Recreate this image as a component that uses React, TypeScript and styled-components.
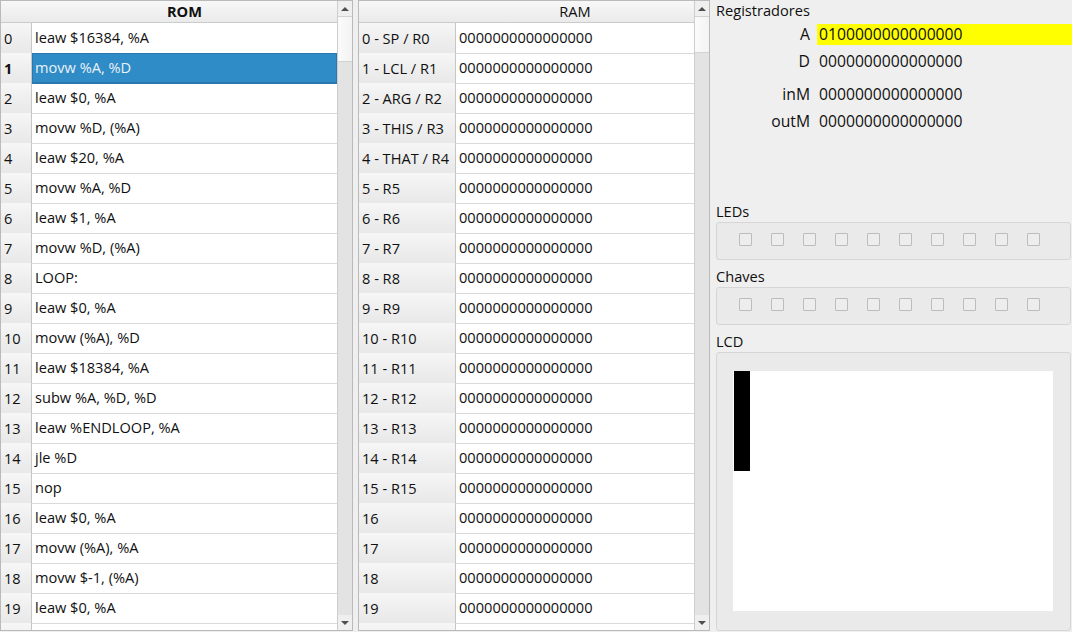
import React from 'react';
import styled, { createGlobalStyle } from 'styled-components';

const GlobalStyle = createGlobalStyle`
  html, body {
    margin: 0;
    padding: 0;
    background: #efefef;
  }
  body {
    font-family: 'Open Sans', 'Noto Sans', 'DejaVu Sans', sans-serif;
    font-size: 14.6px;
    color: #101010;
  }
`;

const Window = styled.div`
  width: 1072px;
  height: 632px;
  display: flex;
  flex-direction: row;
  gap: 5px;
  overflow: hidden;
  background: #efefef;
`;

const Frame = styled.div<{ $width: number }>`
  width: ${(p) => p.$width}px;
  height: 631px;
  box-sizing: border-box;
  border: 1px solid #bababa;
  display: flex;
  flex-direction: row;
  background: #ffffff;
  flex-shrink: 0;
`;

const Grid = styled.div`
  flex: 1;
  min-width: 0;
  overflow: hidden;
  display: flex;
  flex-direction: column;
`;

const HeaderRow = styled.div<{ $gutter: number }>`
  height: 22px;
  flex-shrink: 0;
  box-sizing: border-box;
  display: grid;
  grid-template-columns: ${(p) => p.$gutter}px 1fr;
  border-bottom: 1px solid #cbcbcb;
  background: linear-gradient(#f8f8f8, #eaeaea);
`;

const HeaderTitle = styled.div<{ $bold?: boolean }>`
  text-align: center;
  line-height: 21px;
  font-weight: ${(p) => (p.$bold ? 700 : 400)};
`;

const Row = styled.div<{ $gutter: number }>`
  height: 30px;
  flex-shrink: 0;
  display: grid;
  grid-template-columns: ${(p) => p.$gutter}px 1fr;
`;

const RowHead = styled.div<{ $current?: boolean }>`
  box-sizing: border-box;
  border-right: 1px solid #c6c6c6;
  border-bottom: 1px solid #d0d0d0;
  background: linear-gradient(#f6f6f6, #e8e8e8);
  padding-left: 3px;
  line-height: 30px;
  white-space: nowrap;
  font-weight: ${(p) => (p.$current ? 700 : 400)};
`;

const Cell = styled.div<{ $selected?: boolean }>`
  box-sizing: border-box;
  border-bottom: 1px solid ${(p) => (p.$selected ? '#2a78ad' : '#dadada')};
  padding-left: 3px;
  line-height: 29px;
  white-space: nowrap;
  background: ${(p) => (p.$selected ? '#308cc6' : 'transparent')};
  color: ${(p) => (p.$selected ? '#eaf2f9' : 'inherit')};
  box-shadow: ${(p) => (p.$selected ? 'inset 0 0 0 1px #2a78ad' : 'none')};
`;

const Scrollbar = styled.div`
  width: 15px;
  flex-shrink: 0;
  box-sizing: border-box;
  border-left: 1px solid #cdcdcd;
  background: #e3e3e3;
  display: flex;
  flex-direction: column;
`;

const ArrowButton = styled.div`
  height: 15px;
  flex-shrink: 0;
  display: flex;
  align-items: center;
  justify-content: center;
  background: #efefef;
`;

const Arrow = styled.div<{ $down?: boolean }>`
  width: 0;
  height: 0;
  border-left: 4px solid transparent;
  border-right: 4px solid transparent;
  ${(p) =>
    p.$down
      ? 'border-top: 4px solid #505050;'
      : 'border-bottom: 4px solid #505050;'}
`;

const Track = styled.div`
  flex: 1;
  display: flex;
  flex-direction: column;
`;

const Handle = styled.div<{ $height: number }>`
  height: ${(p) => p.$height}px;
  box-sizing: border-box;
  border-top: 1px solid #d2d2d2;
  border-bottom: 1px solid #d2d2d2;
  background: linear-gradient(90deg, #fbfbfb, #f3f3f3);
`;

const Side = styled.div`
  flex: 1;
  display: flex;
  flex-direction: column;
  padding: 0 1px 0 1px;
  min-width: 0;
`;

const Registers = styled.div`
  height: 201px;
  flex-shrink: 0;
`;

const Caption = styled.div`
  height: 21px;
  line-height: 20px;
  flex-shrink: 0;
`;

const RegGrid = styled.div`
  margin-top: 3px;
  display: grid;
  grid-template-columns: 94px 1fr;
  column-gap: 7px;
  row-gap: 6px;
  font-size: 15.7px;
`;

const RegLabel = styled.div<{ $gap?: boolean }>`
  text-align: right;
  line-height: 21px;
  height: 21px;
  margin-top: ${(p) => (p.$gap ? 6 : 0)}px;
`;

const RegValue = styled.div<{ $hl?: boolean; $gap?: boolean }>`
  height: 21px;
  line-height: 21px;
  padding-left: 2px;
  margin-right: -1px;
  margin-top: ${(p) => (p.$gap ? 6 : 0)}px;
  background: ${(p) => (p.$hl ? '#ffff00' : 'transparent')};
`;

const Section = styled.div`
  display: flex;
  flex-direction: column;
  margin-bottom: 6px;
`;

const GroupBox = styled.div`
  box-sizing: border-box;
  border: 1px solid #d6d6d6;
  border-radius: 3px;
  background: #eaeaea;
`;

const CheckRow = styled(GroupBox)`
  height: 38px;
  display: flex;
  flex-direction: row;
  align-items: flex-start;
  padding: 10px 0 0 22px;
  gap: 19px;
`;

const CheckBox = styled.div`
  width: 13px;
  height: 13px;
  box-sizing: border-box;
  border: 1px solid #bcbcbc;
  border-radius: 1px;
  background: #ededed;
`;

const LcdBox = styled(GroupBox)`
  height: 279px;
  padding: 18px 0 0 16px;
`;

type Entry = { label: string; value: string; selected?: boolean; current?: boolean };

const rom: Entry[] = [
  'leaw $16384, %A',
  'movw %A, %D',
  'leaw $0, %A',
  'movw %D, (%A)',
  'leaw $20, %A',
  'movw %A, %D',
  'leaw $1, %A',
  'movw %D, (%A)',
  'LOOP:',
  'leaw $0, %A',
  'movw (%A), %D',
  'leaw $18384, %A',
  'subw %A, %D, %D',
  'leaw %ENDLOOP, %A',
  'jle %D',
  'nop',
  'leaw $0, %A',
  'movw (%A), %A',
  'movw $-1, (%A)',
  'leaw $0, %A',
  '',
].map((value, i) => ({
  label: i === 20 ? '' : String(i),
  value,
  selected: i === 1,
  current: i === 1,
}));

const ramNames = ['0 - SP / R0', '1 - LCL / R1', '2 - ARG / R2', '3 - THIS / R3', '4 - THAT / R4'];
const ram: Entry[] = Array.from({ length: 21 }, (_, i) => ({
  label: i < 5 ? ramNames[i] : i < 16 ? `${i} - R${i}` : i === 20 ? '' : String(i),
  value: i === 20 ? '' : '0000000000000000',
}));

function Table(props: {
  title: string;
  bold?: boolean;
  width: number;
  gutter: number;
  rows: Entry[];
  handle: number;
}) {
  const { title, bold, width, gutter, rows, handle } = props;
  return (
    <Frame $width={width}>
      <Grid>
        <HeaderRow $gutter={gutter}>
          <div />
          <HeaderTitle $bold={bold}>{title}</HeaderTitle>
        </HeaderRow>
        {rows.map((r, i) => (
          <Row key={i} $gutter={gutter}>
            <RowHead $current={r.current}>{r.label}</RowHead>
            <Cell $selected={r.selected}>{r.value}</Cell>
          </Row>
        ))}
      </Grid>
      <Scrollbar>
        <ArrowButton>
          <Arrow />
        </ArrowButton>
        <Track>
          <Handle $height={handle} />
        </Track>
        <ArrowButton>
          <Arrow $down />
        </ArrowButton>
      </Scrollbar>
    </Frame>
  );
}

const registers = [
  { name: 'A', value: '0100000000000000', hl: true },
  { name: 'D', value: '0000000000000000' },
  { name: 'inM', value: '0000000000000000', gap: true },
  { name: 'outM', value: '0000000000000000' },
];

function Checks() {
  return (
    <CheckRow>
      {Array.from({ length: 10 }, (_, i) => (
        <CheckBox key={i} />
      ))}
    </CheckRow>
  );
}

export default function App() {
  return (
    <>
      <GlobalStyle />
      <Window>
        <Table title="ROM" bold width={353} gutter={31} rows={rom} handle={46} />
        <Table title="RAM" width={352} gutter={97} rows={ram} handle={37} />
        <Side>
          <Registers>
            <Caption>Registradores</Caption>
            <RegGrid>
              {registers.map((r) => (
                <React.Fragment key={r.name}>
                  <RegLabel $gap={r.gap}>{r.name}</RegLabel>
                  <RegValue $hl={r.hl} $gap={r.gap}>
                    {r.value}
                  </RegValue>
                </React.Fragment>
              ))}
            </RegGrid>
          </Registers>
          <Section>
            <Caption>LEDs</Caption>
            <Checks />
          </Section>
          <Section>
            <Caption>Chaves</Caption>
            <Checks />
          </Section>
          <Section>
            <Caption>LCD</Caption>
            <LcdBox>
              <svg width="320" height="240" viewBox="0 0 320 240">
                <rect x="0" y="0" width="320" height="240" fill="#ffffff" />
                <rect x="1" y="0" width="16" height="100" fill="#000000" />
              </svg>
            </LcdBox>
          </Section>
        </Side>
      </Window>
    </>
  );
}
